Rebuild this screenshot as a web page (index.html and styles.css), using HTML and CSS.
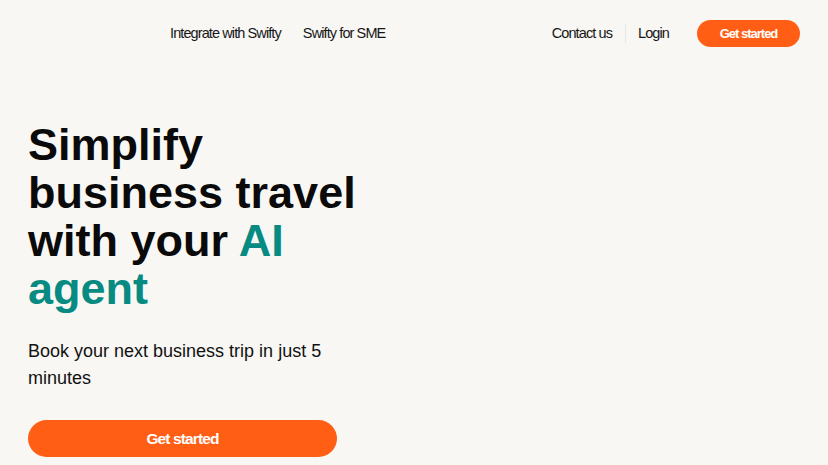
FILE: index.html
```html
<!DOCTYPE html>
<html lang="en">
<head>
<meta charset="utf-8">
<title>Swifty</title>
<link rel="stylesheet" href="styles.css">
</head>
<body>
<header class="nav">
  <div class="nav-left">
    <div class="logo" aria-hidden="true"></div>
    <a class="nav-link" href="#">Integrate with Swifty</a>
    <a class="nav-link" href="#">Swifty for SME</a>
  </div>
  <div class="nav-right">
    <a class="nav-link" href="#">Contact us</a>
    <span class="sep"></span>
    <a class="nav-link" href="#">Login</a>
    <a class="btn btn-nav" href="#">Get started</a>
  </div>
</header>
<main class="hero">
  <h1 class="title">Simplify business travel with your <span class="accent">AI</span> <span class="accent">agent</span></h1>
  <p class="subtitle">Book your next business trip in just 5 minutes</p>
  <a class="btn btn-hero" href="#">Get started</a>
</main>
</body>
</html>
```

FILE: styles.css
```css
* { box-sizing: border-box; }
html, body { margin: 0; padding: 0; }
body {
  background: #f8f7f4;
  font-family: "Liberation Sans", Arial, sans-serif;
  color: #111;
  width: 828px;
  height: 465px;
  overflow: hidden;
}
a { text-decoration: none; color: inherit; }

.nav {
  height: 66px;
  padding: 0 28px;
  display: flex;
  align-items: center;
  justify-content: space-between;
}
.nav-left, .nav-right {
  display: flex;
  align-items: center;
}
.logo { width: 120px; height: 24px; margin-right: 22px; }
.nav-left .nav-link + .nav-link { margin-left: 22px; }
.nav-link {
  font-size: 14.5px;
  letter-spacing: -0.9px;
  color: #161616;
  line-height: 20px;
}
.sep {
  width: 1px;
  height: 19px;
  background: #e8e6e1;
  margin: 0 12px 0 13px;
}
.btn {
  display: flex;
  align-items: center;
  justify-content: center;
  background: #ff5e14;
  color: #fff;
  font-weight: 700;
  border-radius: 999px;
}
.btn-nav {
  margin-left: 28px;
  width: 103px;
  height: 27px;
  font-size: 13px;
  letter-spacing: -1px;
}

.hero {
  padding: 55px 28px 0;
}
.title {
  margin: 0;
  width: 345px;
  font-size: 45px;
  line-height: 48px;
  font-weight: 700;
  color: #0a0a0a;
}
.accent { color: #078a82; }
.subtitle {
  margin: 25px 0 0;
  width: 345px;
  font-size: 18px;
  line-height: 27px;
  color: #111;
}
.btn-hero {
  margin-top: 28px;
  width: 309px;
  height: 37px;
  font-size: 15.5px;
  letter-spacing: -0.88px;
}
```
